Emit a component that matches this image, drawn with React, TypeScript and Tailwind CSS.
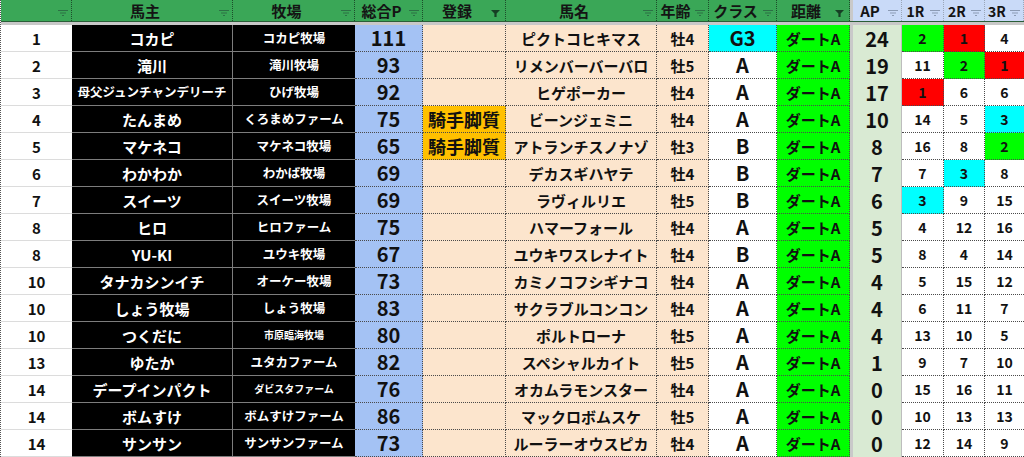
import React from 'react'

type Row = {
  rank: number
  owner: string
  farm: string
  total: number
  reg: string
  horse: string
  age: string
  cls: string
  ap: number
  r: [number, number, number]
  ownerSize?: string
  farmSize?: string
}

const rows: Row[] = [
  { rank: 1, owner: 'コカピ', farm: 'コカピ牧場', total: 111, reg: '', horse: 'ピクトコヒキマス', age: '牡4', cls: 'G3', ap: 24, r: [2, 1, 4] },
  { rank: 2, owner: '滝川', farm: '滝川牧場', total: 93, reg: '', horse: 'リメンバーバーバロ', age: '牡5', cls: 'A', ap: 19, r: [11, 2, 1] },
  { rank: 3, owner: '母父ジュンチャンデリーチ', farm: 'ひげ牧場', total: 92, reg: '', horse: 'ヒゲポーカー', age: '牡4', cls: 'A', ap: 17, r: [1, 6, 6], ownerSize: 'text-[12.5px]' },
  { rank: 4, owner: 'たんまめ', farm: 'くろまめファーム', total: 75, reg: '騎手脚質', horse: 'ビーンジェミニ', age: '牡4', cls: 'A', ap: 10, r: [14, 5, 3] },
  { rank: 5, owner: 'マケネコ', farm: 'マケネコ牧場', total: 65, reg: '騎手脚質', horse: 'アトランチスノナゾ', age: '牡3', cls: 'B', ap: 8, r: [16, 8, 2] },
  { rank: 6, owner: 'わかわか', farm: 'わかば牧場', total: 69, reg: '', horse: 'デカスギハヤテ', age: '牡4', cls: 'B', ap: 7, r: [7, 3, 8] },
  { rank: 7, owner: 'スイーツ', farm: 'スイーツ牧場', total: 69, reg: '', horse: 'ラヴィルリエ', age: '牡5', cls: 'B', ap: 6, r: [3, 9, 15] },
  { rank: 8, owner: 'ヒロ', farm: 'ヒロファーム', total: 75, reg: '', horse: 'ハマーフォール', age: '牡4', cls: 'A', ap: 5, r: [4, 12, 16] },
  { rank: 8, owner: 'YU-KI', farm: 'ユウキ牧場', total: 67, reg: '', horse: 'ユウキワスレナイト', age: '牡4', cls: 'B', ap: 5, r: [8, 4, 14] },
  { rank: 10, owner: 'タナカシンイチ', farm: 'オーケー牧場', total: 73, reg: '', horse: 'カミノコフシギナコ', age: '牡4', cls: 'A', ap: 4, r: [5, 15, 12] },
  { rank: 10, owner: 'しょう牧場', farm: 'しょう牧場', total: 83, reg: '', horse: 'サクラブルコンコン', age: '牡4', cls: 'A', ap: 4, r: [6, 11, 7] },
  { rank: 10, owner: 'つくだに', farm: '市原臨海牧場', total: 80, reg: '', horse: 'ポルトローナ', age: '牡5', cls: 'A', ap: 4, r: [13, 10, 5], farmSize: 'text-[10px]' },
  { rank: 13, owner: 'ゆたか', farm: 'ユタカファーム', total: 82, reg: '', horse: 'スペシャルカイト', age: '牡5', cls: 'A', ap: 1, r: [9, 7, 10] },
  { rank: 14, owner: 'デープインパクト', farm: 'ダビスタファーム', total: 76, reg: '', horse: 'オカムラモンスター', age: '牡4', cls: 'A', ap: 0, r: [15, 16, 11], farmSize: 'text-[10px]' },
  { rank: 14, owner: 'ボムすけ', farm: 'ボムすけファーム', total: 86, reg: '', horse: 'マックロボムスケ', age: '牡5', cls: 'A', ap: 0, r: [10, 13, 13] },
  { rank: 14, owner: 'サンサン', farm: 'サンサンファーム', total: 73, reg: '', horse: 'ルーラーオウスピカ', age: '牡4', cls: 'A', ap: 0, r: [12, 14, 9] },
]

const grid = 'grid grid-cols-[71px_161px_122px_68px_83px_151px_52px_68px_73px_3px_49px_42px_41px_39px]'
const font = { fontFamily: '"Noto Sans CJK JP", "Noto Sans", sans-serif' }

function FilterIcon({ active, blue }: { active?: boolean; blue?: boolean }) {
  if (active) {
    return (
      <svg width="9" height="7" viewBox="0 0 9 7" className="absolute right-[5px] bottom-[4px]">
        <path d="M0 0h9L5.6 3.4V7H3.4V3.4Z" fill="#163f24" />
      </svg>
    )
  }
  return (
    <svg width="10" height="6" viewBox="0 0 10 6" className="absolute right-[3px] bottom-[5px]">
      <path d="M0 0.5h10M2 3h6M4 5.5h2" stroke={blue ? '#8b9bb5' : '#2c7045'} strokeWidth="1" />
    </svg>
  )
}

function Head({ label, active, blue, size = 'text-[15px]' }: { label: string; active?: boolean; blue?: boolean; size?: string }) {
  return (
    <div
      className={`relative flex items-center justify-center pr-[14px] h-[21px] leading-none font-bold text-[#141414] border-r border-dotted ${size} ${
        blue ? 'bg-[#c9daf8] border-[#9aa6b8]' : 'bg-[#3aa757] border-[#1d4d2b]'
      }`}
    >
      <span className="whitespace-nowrap">{label}</span>
      <FilterIcon active={active} blue={blue} />
    </div>
  )
}

function raceBg(n: number) {
  if (n === 1) return 'bg-[#ff0000]'
  if (n === 2) return 'bg-[#00ff00]'
  if (n === 3) return 'bg-[#00ffff]'
  return 'bg-white'
}

function DataRow({ row }: { row: Row }) {
  const dot = 'border-r border-b border-dotted border-[#4a4a4a] flex items-center justify-center font-bold text-[#111]'
  return (
    <div className={`${grid} h-[27px] leading-none`}>
      <div className="bg-white border-b border-[#dcdcdc] flex items-center justify-center font-bold text-[15px] text-[#111]">{row.rank}</div>
      <div className={`bg-black text-white border-r border-b border-[#7d7d7d] flex items-center justify-center font-bold whitespace-nowrap ${row.ownerSize ?? 'text-[15px]'}`}>
        {row.owner}
      </div>
      <div className={`bg-black text-white border-b border-[#7d7d7d] flex items-center justify-center font-bold whitespace-nowrap ${row.farmSize ?? 'text-[12.5px]'}`}>
        {row.farm}
      </div>
      <div className={`${dot} bg-[#a4c2f4] text-[20px]`}>{row.total}</div>
      <div className={`${dot} text-[18px] ${row.reg ? 'bg-[#ffc000]' : 'bg-[#fce5cd]'}`}>{row.reg}</div>
      <div className={`${dot} bg-[#fce5cd] text-[15px] whitespace-nowrap`}>{row.horse}</div>
      <div className={`${dot} bg-[#fce5cd] text-[15px]`}>{row.age}</div>
      <div className={`${dot} text-[20px] ${row.cls === 'G3' ? 'bg-[#00ffff]' : 'bg-white'}`}>{row.cls}</div>
      <div className={`${dot} bg-[#00ff00] text-[15px]`}>ダートA</div>
      <div className="bg-[#c9c9c9]" />
      <div className="bg-[#d9ead3] border-r border-[#bdbdbd] flex items-center justify-center font-bold text-[20px] text-[#111]">{row.ap}</div>
      {row.r.map((n, i) => (
        <div key={i} className={`${dot} text-[14px] ${raceBg(n)} ${i === 2 ? 'border-r-0' : ''}`}>
          {n}
        </div>
      ))}
    </div>
  )
}

export default function App() {
  return (
    <div className="w-[1024px] h-[457px] overflow-hidden bg-white" style={font}>
      <div className="border-l border-dotted border-[#555]">
        <div className={`${grid} border-b border-[#2a5e38]`}>
          <Head label="" />
          <Head label="馬主" />
          <Head label="牧場" />
          <Head label="総合P" />
          <Head label="登録" active />
          <Head label="馬名" />
          <Head label="年齢" />
          <Head label="クラス" />
          <Head label="距離" active />
          <div className="bg-[#c9c9c9]" />
          <Head label="AP" blue />
          <Head label="1R" blue size="text-[14px]" />
          <Head label="2R" blue size="text-[14px]" />
          <Head label="3R" blue size="text-[14px]" />
        </div>
        <div className="h-[3px] bg-[#c8c8c8]" />
        {rows.map((row, i) => (
          <DataRow key={i} row={row} />
        ))}
      </div>
    </div>
  )
}
